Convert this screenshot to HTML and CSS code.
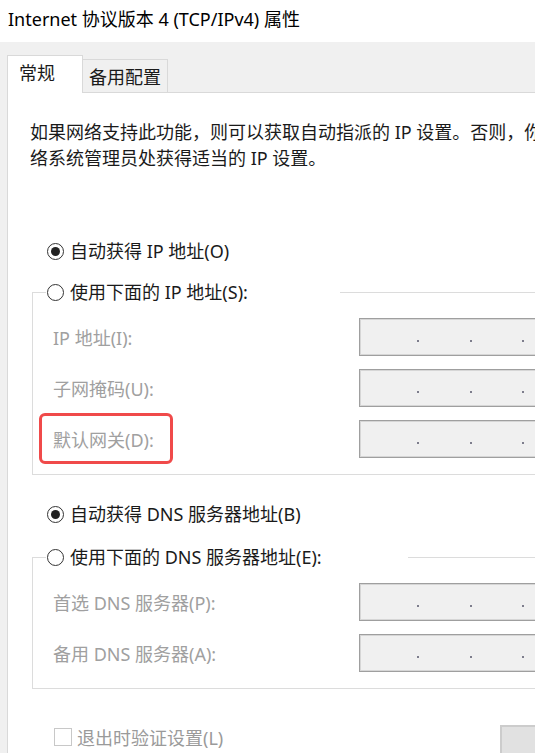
FILE: index.html
```html
<!DOCTYPE html>
<html lang="zh-CN">
<head>
<meta charset="utf-8">
<title>Internet 协议版本 4 (TCP/IPv4) 属性</title>
<link rel="stylesheet" href="styles.css">
</head>
<body>
<div class="window">
  <div class="titlebar">Internet 协议版本 4 (TCP/IPv4) 属性</div>
  <div class="tabs">
    <div class="tab tab-active">常规</div>
    <div class="tab tab-inactive">备用配置</div>
  </div>
  <div class="panel">
    <p class="intro">如果网络支持此功能，则可以获取自动指派的 IP 设置。否则，你需要从网<br>络系统管理员处获得适当的 IP 设置。</p>

    <div class="radio-row radio-first">
      <span class="radio checked"></span>
      <span class="radio-text">自动获得 IP 地址(O)</span>
    </div>

    <fieldset class="group group-ip">
      <legend class="group-legend legend-ip">
        <span class="radio"></span>
        <span class="radio-text">使用下面的 IP 地址(S):</span>
      </legend>
      <div class="field-row">
        <span class="field-label">IP 地址(I):</span>
        <span class="ip-box"><i class="dot"></i><i class="dot"></i><i class="dot"></i></span>
      </div>
      <div class="field-row">
        <span class="field-label">子网掩码(U):</span>
        <span class="ip-box"><i class="dot"></i><i class="dot"></i><i class="dot"></i></span>
      </div>
      <div class="field-row">
        <span class="mark"></span>
        <span class="field-label">默认网关(D):</span>
        <span class="ip-box"><i class="dot"></i><i class="dot"></i><i class="dot"></i></span>
      </div>
    </fieldset>

    <div class="radio-row radio-dns">
      <span class="radio checked"></span>
      <span class="radio-text">自动获得 DNS 服务器地址(B)</span>
    </div>

    <fieldset class="group group-dns">
      <legend class="group-legend legend-dns">
        <span class="radio"></span>
        <span class="radio-text">使用下面的 DNS 服务器地址(E):</span>
      </legend>
      <div class="field-row">
        <span class="field-label">首选 DNS 服务器(P):</span>
        <span class="ip-box"><i class="dot"></i><i class="dot"></i><i class="dot"></i></span>
      </div>
      <div class="field-row">
        <span class="field-label">备用 DNS 服务器(A):</span>
        <span class="ip-box"><i class="dot"></i><i class="dot"></i><i class="dot"></i></span>
      </div>
    </fieldset>

    <div class="bottom-row">
      <div class="check-wrap">
        <span class="checkbox"></span>
        <span class="check-text">退出时验证设置(L)</span>
      </div>
      <div class="button"></div>
    </div>
  </div>
</div>
</body>
</html>
```

FILE: styles.css
```css
html, body {
  margin: 0;
  padding: 0;
}

body {
  width: 535px;
  height: 753px;
  overflow: hidden;
  background: #f0f0f0;
  font-family: "Noto Sans", "Noto Sans CJK SC", sans-serif;
  font-size: 18px;
  color: #1a1a1a;
}

.window {
  width: 535px;
  height: 753px;
}

.titlebar {
  height: 42px;
  line-height: 38px;
  padding-left: 8px;
  background: #ffffff;
  color: #000000;
  white-space: nowrap;
}

.tabs {
  display: flex;
  align-items: flex-end;
  margin-top: 13px;
  margin-bottom: -1px;
  padding-left: 7px;
  position: relative;
  z-index: 1;
}

.tab {
  box-sizing: border-box;
  white-space: nowrap;
  color: #1a1a1a;
}

.tab-active {
  width: 76px;
  height: 38px;
  line-height: 34px;
  padding-left: 11px;
  border: 1px solid #d9d9d9;
  border-bottom: none;
  background: #ffffff;
}

.tab-inactive {
  width: 85px;
  height: 34px;
  line-height: 30px;
  padding-top: 2px;
  padding-left: 6px;
  border: 1px solid #d9d9d9;
  border-left: none;
  background: #f0f0f0;
}

.panel {
  margin-left: 7px;
  width: 640px;
  height: 700px;
  box-sizing: border-box;
  padding-left: 22px;
  padding-top: 1px;
  border-top: 1px solid #d9d9d9;
  border-left: 1px solid #d9d9d9;
  background: #ffffff;
}

.intro {
  margin: 25px 0 0 0;
  line-height: 26px;
  white-space: nowrap;
}

.radio-row {
  display: flex;
  align-items: center;
  height: 26px;
  padding-left: 17px;
  gap: 6px;
  white-space: nowrap;
}

.radio-first {
  margin-top: 67px;
}

.radio-dns {
  margin-top: 26px;
}

.radio {
  box-sizing: border-box;
  width: 17px;
  height: 17px;
  border: 1px solid #333333;
  border-radius: 50%;
  display: flex;
  align-items: center;
  justify-content: center;
  flex: none;
  background: #ffffff;
}

.radio.checked::after {
  content: "";
  width: 9px;
  height: 9px;
  border-radius: 50%;
  background: #222222;
}

.radio-text {
  line-height: 26px;
}

.group {
  margin: 15px 0 0 2px;
  padding: 13px 0 16px 20px;
  border: 1px solid #dcdcdc;
  width: 560px;
  min-width: 0;
}

.group-dns {
  margin-top: 17px;
}

.group-legend {
  display: flex;
  align-items: center;
  gap: 6px;
  box-sizing: border-box;
  height: 26px;
  padding: 0 0 0 1px;
  margin-left: -7px;
  white-space: nowrap;
  background: #ffffff;
}

.legend-ip {
  width: 294px;
}

.legend-dns {
  width: 362px;
}

.field-row {
  position: relative;
  display: flex;
  align-items: center;
  height: 38px;
  margin-bottom: 13px;
}

.field-row:last-child {
  margin-bottom: 0;
}

.field-label {
  width: 306px;
  flex: none;
  color: #a0a0a0;
  white-space: nowrap;
}

.ip-box {
  box-sizing: border-box;
  display: flex;
  align-items: center;
  gap: 50.5px;
  width: 230px;
  height: 38px;
  padding-left: 57px;
  border: 1px solid #9f9f9f;
  box-shadow: inset 0 0 0 1px #d6d6d6;
  background: #f0f0f0;
  flex: none;
}

.dot {
  display: block;
  width: 2px;
  height: 2px;
  margin-top: 8px;
  background: #7d7d8c;
}

.mark {
  position: absolute;
  left: -14px;
  top: -7px;
  width: 134px;
  height: 51px;
  box-sizing: border-box;
  border: 3px solid #f04a4a;
  border-radius: 6px;
  pointer-events: none;
}

.bottom-row {
  display: flex;
  align-items: flex-start;
  margin-top: 35px;
}

.check-wrap {
  display: flex;
  align-items: center;
  gap: 5px;
  width: 470px;
  height: 26px;
  padding-left: 24px;
  box-sizing: border-box;
  white-space: nowrap;
}

.checkbox {
  box-sizing: border-box;
  width: 18px;
  height: 18px;
  border: 1px solid #c8c8c8;
  background: #ffffff;
  flex: none;
}

.check-text {
  color: #9a9a9a;
}

.button {
  box-sizing: border-box;
  margin-top: 1px;
  width: 110px;
  height: 34px;
  border: 2px solid #cccccc;
  background: #e1e1e1;
}
```
